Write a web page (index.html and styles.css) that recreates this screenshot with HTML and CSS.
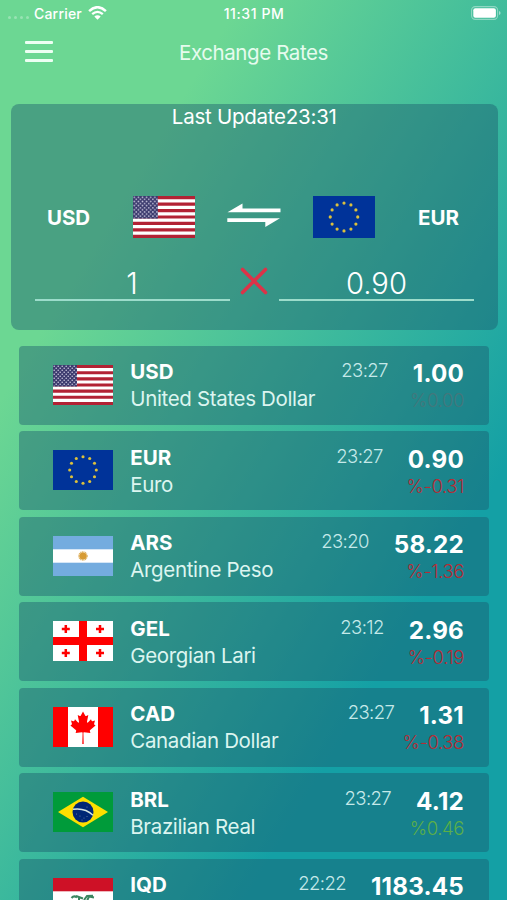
FILE: index.html
```html
<!DOCTYPE html>
<html lang="en">
<head>
    <meta charset="UTF-8">
    <meta name="viewport" content="width=device-width, initial-scale=1.0">
    <title>Exchange Rates</title>
    <link rel="stylesheet" href="styles.css">
</head>
<body>
    <!-- Flag symbols -->
    <svg class="sprite" width="0" height="0">
        <defs>
            <pattern id="stars" width="4" height="4" patternUnits="userSpaceOnUse">
                <circle cx="1.2" cy="1.2" r="0.8" fill="#c9c6dc"/>
                <circle cx="3.2" cy="3.2" r="0.8" fill="#c9c6dc"/>
            </pattern>
            <symbol id="flag-us" viewBox="0 0 60 40" preserveAspectRatio="none">
                <rect width="60" height="40" fill="#fff"/>
                <path d="M0 1.54H60M0 7.69H60M0 13.85H60M0 20H60M0 26.15H60M0 32.3H60M0 38.46H60" stroke="#b22234" stroke-width="3.08"/>
                <rect width="24" height="21.5" fill="#3c3b6e"/>
                <rect width="24" height="21.5" fill="url(#stars)"/>
            </symbol>
            <symbol id="flag-eu" viewBox="0 0 60 40" preserveAspectRatio="none">
                <rect width="60" height="40" fill="#039"/>
                <g fill="#dcc03c">
                    <circle cx="30" cy="6.7" r="1.55"/>
                    <circle cx="36.7" cy="8.5" r="1.55"/>
                    <circle cx="41.5" cy="13.3" r="1.55"/>
                    <circle cx="43.3" cy="20" r="1.55"/>
                    <circle cx="41.5" cy="26.7" r="1.55"/>
                    <circle cx="36.7" cy="31.5" r="1.55"/>
                    <circle cx="30" cy="33.3" r="1.55"/>
                    <circle cx="23.3" cy="31.5" r="1.55"/>
                    <circle cx="18.5" cy="26.7" r="1.55"/>
                    <circle cx="16.7" cy="20" r="1.55"/>
                    <circle cx="18.5" cy="13.3" r="1.55"/>
                    <circle cx="23.3" cy="8.5" r="1.55"/>
                </g>
            </symbol>
            <symbol id="flag-ar" viewBox="0 0 60 40">
                <rect width="60" height="40" fill="#74acdf"/>
                <rect y="13.3" width="60" height="13.4" fill="#fff"/>
                <circle cx="30" cy="20" r="4" fill="none" stroke="#e0b464" stroke-width="1.6" stroke-dasharray="1 .57"/>
                <circle cx="30" cy="20" r="3.6" fill="#d79b33"/>
            </symbol>
            <symbol id="flag-ge" viewBox="0 0 60 40">
                <rect width="60" height="40" fill="#fff"/>
                <path d="M30 0V40M0 20H60" stroke="#f00" stroke-width="8"/>
                <path d="M12.8 4V12M8.8 8H16.8M47 4V12M43 8H51M12.8 28V36M8.8 32H16.8M47 28V36M43 32H51" stroke="#f00" stroke-width="2.5"/>
            </symbol>
            <symbol id="flag-ca" viewBox="0 0 60 40">
                <rect width="60" height="40" fill="#fff"/>
                <path d="M0 0H15V40H0zM45 0H60V40H45z" fill="#f00"/>
                <path d="M30 4.5L32.3 8.8Q32.7 9.3 33.3 9L35.3 8L34 14.8Q34 16.3 35.2 15.3L38 12.3L38.6 13.8Q38.9 14.3 39.5 14.2L42 13.6L41.1 16.8Q40.9 17.5 41.5 17.8L42.6 18.4L37.2 23Q36.6 23.5 36.9 24.3L37.4 26.1L31 25.3Q30.3 25.3 30.4 26.1L30.7 37H29.3L29.6 26.1Q29.7 25.3 29 25.3L22.6 26.1L23.1 24.3Q23.4 23.5 22.8 23L17.4 18.4L18.5 17.8Q19.1 17.5 18.9 16.8L18 13.6L20.5 14.2Q21.1 14.3 21.4 13.8L22 12.3L24.8 15.3Q26 16.3 26 14.8L24.7 8L26.7 9Q27.3 9.3 27.7 8.8Z" fill="#f00"/>
            </symbol>
            <symbol id="flag-br" viewBox="0 0 60 40">
                <rect width="60" height="40" fill="#009b3a"/>
                <path d="M5 20L30 4.8L55 20L30 35.2z" fill="#fedf00"/>
                <circle cx="30" cy="20" r="10.5" fill="#002776"/>
                <path d="M20 17.3Q32 15.5 40 23.2" fill="none" stroke="#d5e5e2" stroke-width="1.4"/>
                <g fill="#7889ae">
                    <circle cx="23.5" cy="22" r=".5"/>
                    <circle cx="27" cy="24" r=".5"/>
                    <circle cx="31" cy="26" r=".5"/>
                    <circle cx="34" cy="24.5" r=".5"/>
                    <circle cx="29" cy="28" r=".5"/>
                    <circle cx="34" cy="15" r=".5"/>
                </g>
            </symbol>
            <symbol id="flag-iq" viewBox="0 0 60 40">
                <rect width="60" height="40" fill="#fff"/>
                <rect width="60" height="13.3" fill="#ce1126"/>
                <rect y="26.7" width="60" height="13.3" fill="#111"/>
                <path d="M18.5 20Q21 17 24 19.5M23 18L30 20.5M26 24V18.5M20 23H28M34 23L36 18.5L41 19.5M31 22L34 18L40 17.7M37 23H42" fill="none" stroke="#3b8660" stroke-width="2"/>
            </symbol>
        </defs>
    </svg>

    <div class="status-bar">
        <div class="carrier">
            <span class="dots"><i></i><i></i><i></i><i></i></span>
            <span>Carrier</span>
            <svg class="wifi" width="19" height="14" viewBox="0 0 19 14">
                <path d="M1.1 5.1Q9.5 -2.7 17.9 5.1" fill="none" stroke="#fff" stroke-width="2.5"/>
                <path d="M4.2 8.2Q9.5 3.5 14.8 8.2" fill="none" stroke="#fff" stroke-width="2.3"/>
                <path d="M9.5 13.8L6.3 10.6Q9.5 7.9 12.7 10.6z" fill="#fff"/>
            </svg>
        </div>
        <div class="clock">11:31 PM</div>
        <svg class="battery" width="30" height="14" viewBox="0 0 30 14">
            <rect x=".6" y=".6" width="26" height="12.8" rx="3.6" fill="none" stroke="#fff" stroke-opacity=".4" stroke-width="1.1"/>
            <rect x="2.3" y="2.3" width="22.6" height="9.4" rx="2" fill="#fff"/>
            <path d="M28 5Q29.6 5.6 29.6 7T28 9z" fill="#fff" fill-opacity=".5"/>
        </svg>
    </div>

    <div class="nav">
        <div class="menu"><span></span><span></span><span></span></div>
        <h1>Exchange Rates</h1>
    </div>

    <div class="converter">
        <div class="last-update">Last Update23:31</div>
        <div class="pair">
            <span class="pair-code">USD</span>
            <svg class="pair-flag"><use href="#flag-us"/></svg>
            <svg class="swap" width="54" height="26" viewBox="0 0 54 26">
                <path d="M.5 9.2L15.5 .5V5.5H53.5V9.2z" fill="#fff"/>
                <path d="M.3 15.2H53L38.3 24V18.9H.3z" fill="#fff"/>
            </svg>
            <svg class="pair-flag"><use href="#flag-eu"/></svg>
            <span class="pair-code">EUR</span>
        </div>
        <div class="amounts">
            <div class="amount">1</div>
            <svg class="times" width="28" height="28" viewBox="0 0 28 28">
                <path d="M2.5 2.5L25.5 25.5M25.5 2.5L2.5 25.5" stroke="#dc3348" stroke-width="3.6" stroke-linecap="round"/>
            </svg>
            <div class="amount">0.90</div>
        </div>
    </div>

    <div class="rates">
        <div class="rate">
            <svg class="flag"><use href="#flag-us"/></svg>
            <div class="currency"><b>USD</b><span>United States Dollar</span></div>
            <div class="time">23:27</div>
            <div class="quote"><b>1.00</b><span class="flat">%0.00</span></div>
        </div>
        <div class="rate">
            <svg class="flag"><use href="#flag-eu"/></svg>
            <div class="currency"><b>EUR</b><span>Euro</span></div>
            <div class="time">23:27</div>
            <div class="quote"><b>0.90</b><span class="down">%-0.31</span></div>
        </div>
        <div class="rate">
            <svg class="flag"><use href="#flag-ar"/></svg>
            <div class="currency"><b>ARS</b><span>Argentine Peso</span></div>
            <div class="time">23:20</div>
            <div class="quote"><b>58.22</b><span class="down">%-1.36</span></div>
        </div>
        <div class="rate">
            <svg class="flag"><use href="#flag-ge"/></svg>
            <div class="currency"><b>GEL</b><span>Georgian Lari</span></div>
            <div class="time">23:12</div>
            <div class="quote"><b>2.96</b><span class="down">%-0.19</span></div>
        </div>
        <div class="rate">
            <svg class="flag"><use href="#flag-ca"/></svg>
            <div class="currency"><b>CAD</b><span>Canadian Dollar</span></div>
            <div class="time">23:27</div>
            <div class="quote"><b>1.31</b><span class="down">%-0.38</span></div>
        </div>
        <div class="rate">
            <svg class="flag"><use href="#flag-br"/></svg>
            <div class="currency"><b>BRL</b><span>Brazilian Real</span></div>
            <div class="time">23:27</div>
            <div class="quote"><b>4.12</b><span class="up">%0.46</span></div>
        </div>
        <div class="rate">
            <svg class="flag"><use href="#flag-iq"/></svg>
            <div class="currency"><b>IQD</b><span></span></div>
            <div class="time">22:22</div>
            <div class="quote"><b>1183.45</b><span></span></div>
        </div>
    </div>
</body>
</html>
```

FILE: styles.css
```css
* {
    box-sizing: border-box;
}
body {
    margin: 0;
    height: 900px;
    overflow: hidden;
    font-family: Inter, "Liberation Sans", sans-serif;
    color: #fff;
    background: linear-gradient(121deg, #6cd793 23%, #14a0a5 75%);
}
svg {
    display: block;
    flex: none;
}
.sprite {
    height: 0;
}

/* status bar */
.status-bar {
    display: grid;
    grid-template-columns: 1fr auto 1fr;
    align-items: center;
    height: 26px;
    padding: 0 6px 0 8px;
    font-size: 14px;
    font-weight: 500;
}
.carrier {
    display: flex;
    align-items: center;
    letter-spacing: 0.2px;
}
.clock {
    letter-spacing: 0.6px;
    margin-right: 1px;
}
.dots {
    display: flex;
    gap: 3px;
    margin: 8px 5px 0 0;
}
.dots i {
    width: 3px;
    height: 3px;
    border-radius: 50%;
    background: rgba(255, 255, 255, 0.3);
}
.wifi {
    margin-left: 6px;
}
.battery {
    justify-self: end;
}

/* nav */
.nav {
    display: grid;
    grid-template-columns: 80px 1fr 80px;
    align-items: center;
    height: 52px;
}
.menu {
    display: flex;
    flex-direction: column;
    gap: 6px;
    width: 28px;
    margin: -2px 0 0 25px;
}
.menu span {
    height: 3px;
    border-radius: 1px;
    background: #edfff3;
}
.nav h1 {
    margin: 0;
    font-size: 20.5px;
    font-weight: 400;
    letter-spacing: -0.4px;
    text-align: center;
    color: #e6fbee;
}

/* converter */
.converter {
    height: 226px;
    margin: 25.5px 9px 0 10.5px;
    border-radius: 8px;
    background: rgba(26, 85, 107, 0.42);
}
.last-update {
    height: 26px;
    line-height: 26px;
    font-size: 20.5px;
    letter-spacing: -0.25px;
    text-align: center;
}
.pair {
    display: flex;
    align-items: center;
    height: 42px;
    margin-top: 66.2px;
}
.pair-code {
    width: 116px;
    padding-top: 1px;
    text-align: center;
    font-size: 20.5px;
    font-weight: 700;
}
.pair-flag {
    width: 62px;
    height: 42px;
    margin: 0 6px;
}
.swap {
    margin: 0 26px 2px;
}
.amounts {
    display: flex;
    justify-content: space-between;
    margin: 25px 24px 0;
}
.amount {
    width: 195px;
    height: 38px;
    line-height: 42px;
    border-bottom: 2px solid #9cdccb;
    font-size: 29.2px;
    font-weight: 300;
    text-align: center;
}
.times {
    margin-top: 4px;
}

/* rates list */
.rates {
    display: flex;
    flex-direction: column;
    gap: 6.5px;
    padding: 16px 18px 0 19px;
}
.rate {
    display: flex;
    flex: none;
    height: 79px;
    padding: 12.5px 25px 0 34px;
    border-radius: 4px;
    background: rgba(26, 85, 107, 0.42);
}
.flag {
    width: 60px;
    height: 40px;
    margin: 6.9px 17.3px 0 0;
}
.currency {
    display: flex;
    flex-direction: column;
    flex: 1;
    font-size: 20.5px;
    line-height: 27px;
    white-space: nowrap;
}
.currency span {
    letter-spacing: -0.35px;
    color: #dcf5f0;
}
.time {
    line-height: 24px;
    font-size: 18.5px;
    font-weight: 300;
    letter-spacing: -0.6px;
    color: #c5e9e9;
}
.quote {
    display: flex;
    flex-direction: column;
    align-items: flex-end;
    margin-left: 25px;
    line-height: 31px;
    font-size: 24.2px;
    letter-spacing: 0.2px;
}
/* zero width, so that only the rate itself sets the column's width */
.quote span {
    display: flex;
    justify-content: flex-end;
    width: 0;
    line-height: 22px;
    font-size: 18.5px;
    font-weight: 300;
    letter-spacing: -0.4px;
}
.flat {
    color: #43777c;
}
.down {
    color: #b42d36;
}
.up {
    color: #5caf48;
}
```
